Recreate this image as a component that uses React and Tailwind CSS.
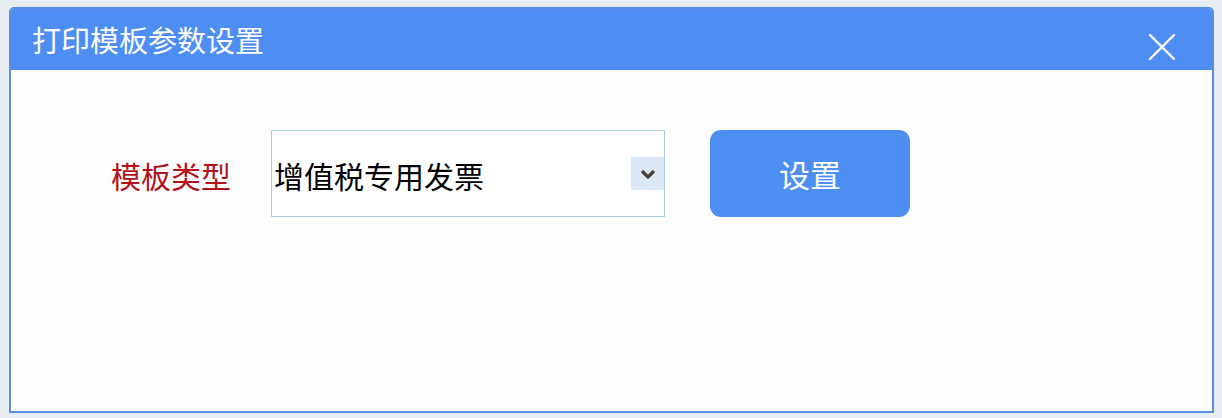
import React, { useState } from 'react';

const font = { fontFamily: '"Noto Sans CJK SC", "Noto Sans", sans-serif' };

const App = () => {
  const [type, setType] = useState('增值税专用发票');

  return (
    <div className="w-[1222px] h-[418px] bg-[#e7edf3] pt-[7px] pl-[9px] overflow-hidden" style={font}>
      {/* Dialog */}
      <div className="w-[1205px] h-[406px] border-2 border-[#5b8ee6] rounded-t-[5px] bg-[#fdfdfd] flex flex-col overflow-hidden">
        {/* Title bar */}
        <div className="h-[61px] bg-[#4e8ef2] flex items-center justify-between pl-[21px] pr-[36px] shrink-0">
          <span className="text-white text-[29px] leading-none">打印模板参数设置</span>
          <svg width="28" height="28" viewBox="0 0 28 28" className="mt-[14px]">
            <path d="M2 2 L26 26 M26 2 L2 26" stroke="#ffffff" strokeWidth="2.4" strokeLinecap="round" />
          </svg>
        </div>

        {/* Body */}
        <div className="flex items-center pl-[100px] pt-[60px]">
          <label className="text-[#b3121b] text-[30px] leading-none w-[120px] mr-[40px] mt-[2px]">模板类型</label>

          <div className="relative w-[394px] h-[87px] border border-[#a9cde3] bg-white flex items-center">
            <span className="text-black text-[30px] leading-none pl-[2px] mt-[2px]">{type}</span>
            <div className="absolute right-[0px] top-[26px] w-[33px] h-[33px] bg-[#dce7f5] flex items-center justify-center">
              <svg width="16" height="10" viewBox="0 0 16 10">
                <path d="M2 2 L8 8 L14 2" fill="none" stroke="#4a3f3a" strokeWidth="3.2" strokeLinejoin="round" />
              </svg>
            </div>
          </div>

          <button
            onClick={() => setType('增值税专用发票')}
            className="ml-[45px] w-[200px] h-[87px] rounded-[11px] bg-[#4d8ef2] text-white text-[31px] leading-none flex items-center justify-center"
          >
            设置
          </button>
        </div>
      </div>
    </div>
  );
};

export default App;
